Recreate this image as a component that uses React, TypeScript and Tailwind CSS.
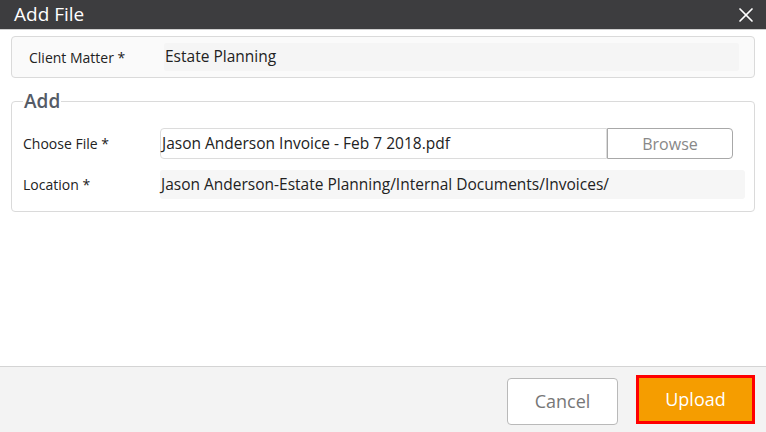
import { X } from "lucide-react";

const font = { fontFamily: '"Segoe UI", "Open Sans", "Noto Sans", sans-serif' };

export default function App() {
  return (
    <div className="flex h-[432px] w-[766px] flex-col bg-white text-[#222]" style={font}>
      {/* Titlebar */}
      <div className="flex h-[30px] shrink-0 items-center justify-between border-b border-[#cfcfcf] bg-[#3d3d3f] pl-[14px] pr-[8px]">
        <span className="text-[19px] leading-none text-white">Add File</span>
        <X className="h-[24px] w-[24px] text-white" strokeWidth={1.7} />
      </div>

      <div className="flex-1 px-[11px] pt-[6px]">
        {/* Client matter */}
        <div className="flex h-[42px] items-center rounded-[4px] border border-[#dadada] bg-[#fafafa] pr-[15px]">
          <span className="w-[152px] shrink-0 pl-[17px] text-[14px]">Client Matter *</span>
          <div className="flex h-[28px] flex-1 items-center rounded-[3px] bg-[#f5f5f5] pl-[1px] text-[15.5px]">
            Estate Planning
          </div>
        </div>

        {/* Add fieldset */}
        <fieldset className="mt-[13px] rounded-[4px] border border-[#dadada] pb-[12px] pl-[11px] pr-[9px] pt-[17px]">
          <legend className="px-[1px] text-[19px] font-semibold leading-[20px] text-[#555b66]">Add</legend>
          <div className="flex h-[31px] items-center">
            <span className="w-[137px] shrink-0 text-[14px]">Choose File *</span>
            <div className="flex h-[31px] flex-1 items-center rounded-l-[4px] border border-[#dcdcdc] bg-white pl-[1px] text-[15.5px]">
              Jason Anderson Invoice - Feb 7 2018.pdf
            </div>
            <button className="h-[31px] w-[126px] shrink-0 rounded-r-[4px] border border-[#a8a8a8] bg-white text-[16px] text-[#888]">
              Browse
            </button>
            <div className="w-[12px] shrink-0" />
          </div>
          <div className="mt-[11px] flex h-[29px] items-center">
            <span className="w-[137px] shrink-0 text-[14px]">Location *</span>
            <div className="flex h-[29px] flex-1 items-center rounded-[3px] bg-[#f6f6f6] pl-[1px] text-[15.5px]">
              Jason Anderson-Estate Planning/Internal Documents/Invoices/
            </div>
          </div>
        </fieldset>
      </div>

      {/* Footer */}
      <div className="flex h-[66px] shrink-0 items-center justify-end gap-[18px] border-t border-[#d4d4d4] bg-[#f3f3f3] pr-[11px]">
        <button className="mt-[3px] h-[47px] w-[111px] rounded-[4px] border border-[#b9b9b9] bg-white text-[18px] text-[#777]">
          Cancel
        </button>
        <button className="h-[49px] w-[119px] border-[3px] border-[#ff0000] bg-[#f59d00] text-[18px] text-white">
          Upload
        </button>
      </div>
    </div>
  );
}
